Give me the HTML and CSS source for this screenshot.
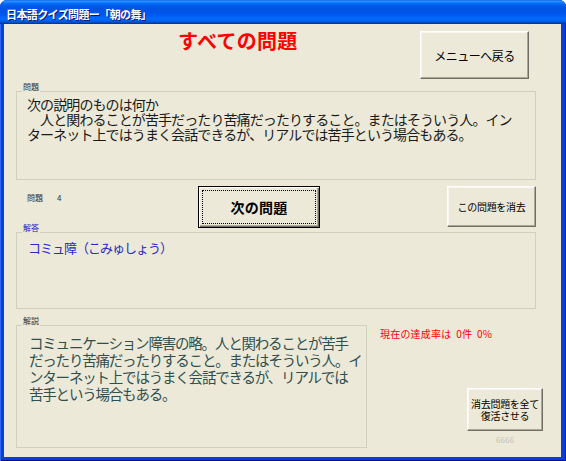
FILE: index.html
```html
<!DOCTYPE html>
<html lang="ja">
<head>
<meta charset="utf-8">
<title>日本語クイズ問題</title>
<link rel="stylesheet" href="styles.css">
</head>
<body>
<div class="window">
  <div class="titlebar"><span class="title">日本語クイズ問題ー「朝の舞」</span></div>
  <div class="client">
    <div class="row-top">
      <h1 class="heading">すべての問題</h1>
      <button class="btn btn-menu">メニューへ戻る</button>
    </div>
    <div class="frame frame-q">
      <span class="frame-label">問題</span>
      <p class="q-text">次の説明のものは何か<br>　人と関わることが苦手だったり苦痛だったりすること。またはそういう人。イン<br>ターネット上ではうまく会話できるが、リアルでは苦手という場合もある。</p>
    </div>
    <div class="row-mid">
      <div class="qno"><span>問題</span><span class="num">4</span></div>
      <button class="btn btn-default btn-next"><span class="focus">次の問題</span></button>
      <span class="spacer"></span>
      <button class="btn btn-del">この問題を消去</button>
    </div>
    <div class="frame frame-a">
      <span class="frame-label label-blue">解答</span>
      <p class="a-text">コミュ障（こみゅしょう）</p>
    </div>
    <div class="row-bottom">
      <div class="frame frame-e">
        <span class="frame-label">解説</span>
        <p class="e-text">コミュニケーション障害の略。人と関わることが苦手<br>だったり苦痛だったりすること。またはそういう人。イ<br>ンターネット上ではうまく会話できるが、リアルでは<br>苦手という場合もある。</p>
      </div>
      <div class="side">
        <div class="rate">現在の達成率は&nbsp;&nbsp;0件&nbsp;&nbsp;0%</div>
        <button class="btn btn-restore">消去問題を全て<br>復活させる</button>
        <div class="code">6666</div>
      </div>
    </div>
  </div>
</div>
</body>
</html>
```

FILE: styles.css
```css
html, body {
  margin: 0;
  padding: 0;
  background: #ffffff;
}

body {
  font-family: "Noto Sans CJK JP", "Noto Sans", sans-serif;
}

.window {
  width: 566px;
  height: 461px;
  display: flex;
  flex-direction: column;
  background: #0a3fd6;
  border-radius: 7px 7px 0 0;
  box-shadow: inset 1px 0 #2d6cf0, inset -1px 0 #0026a6, inset 0 -1px #00138c;
  overflow: hidden;
}

.titlebar {
  height: 24px;
  flex: none;
  display: flex;
  align-items: center;
  padding-left: 6px;
  background: linear-gradient(to bottom,
    #0058ee 0%, #3593ff 4%, #288eff 7%, #127dff 10%, #036ffc 14%,
    #0262ee 20%, #0057e5 28%, #0054e3 36%, #0055eb 56%, #005bf5 66%,
    #026afe 76%, #0062ef 86%, #0052d6 92%, #0040ab 96%, #003092 100%);
}

.title {
  color: #ffffff;
  font-size: 11px;
  font-weight: bold;
  letter-spacing: -0.6px;
  line-height: 14px;
  margin-top: 3px;
  text-shadow: 1px 1px #0a1883;
}

.client {
  flex: 1;
  margin: 0 5px 4px 4px;
  padding-left: 12px;
  background: #ece9d8;
}

.row-top {
  display: grid;
  grid-template-columns: 162px 242px 109px;
  height: 55px;
}

.heading {
  grid-column: 2;
  margin: 5px 0 0;
  font-size: 20px;
  line-height: 24px;
  font-weight: bold;
  color: #ff0000;
  letter-spacing: 0.3px;
}

.btn {
  font-family: "Noto Sans CJK JP", "Noto Sans", sans-serif;
  background: #ece9d8;
  color: #000000;
  margin: 0;
  padding: 0;
  border: 1px solid;
  border-color: #ffffff #716f64 #716f64 #ffffff;
  box-shadow: inset -1px -1px #aca899, inset 1px 1px #f7f6f0;
  cursor: default;
}

.btn-menu {
  grid-column: 3;
  margin-top: 7px;
  height: 48px;
  font-size: 12px;
  letter-spacing: -0.5px;
}

.frame {
  position: relative;
  box-sizing: border-box;
  border: 1px solid #d0d0bf;
}

.frame-label {
  position: absolute;
  left: 5px;
  top: -11px;
  height: 11px;
  line-height: 11px;
  padding: 0 1px;
  font-size: 8px;
  color: #303030;
  background: #ece9d8;
}

.label-blue {
  color: #1a1ad0;
}

.frame-q {
  margin-top: 12px;
  width: 520px;
  height: 89px;
  padding: 5px 0 0 10px;
}

.q-text {
  margin: 0;
  font-size: 14px;
  line-height: 15px;
  letter-spacing: -0.9px;
  color: #1a1a1a;
  white-space: nowrap;
}

.row-mid {
  display: grid;
  grid-template-columns: 182px 122px 127px 89px;
  height: 42px;
  margin-top: 6px;
}

.qno {
  padding: 6px 0 0 11px;
  font-size: 8px;
  line-height: 11px;
  color: #303030;
}

.qno .num {
  margin-left: 14px;
}

.btn-default {
  border: 1px solid #000000;
  box-shadow: inset 1px 1px #ffffff, inset -1px -1px #716f64, inset -2px -2px #aca899;
  display: flex;
  padding: 3px;
}

.btn-next {
  height: 42px;
}

.btn-next .focus {
  flex: 1;
  display: flex;
  align-items: center;
  justify-content: center;
  border: 1px dotted #000000;
  font-size: 14px;
  font-weight: bold;
  letter-spacing: 0.3px;
}

.btn-del {
  height: 41px;
  font-size: 10px;
  letter-spacing: -0.3px;
}

.frame-a {
  margin-top: 4px;
  width: 520px;
  height: 77px;
  padding: 7px 0 0 11px;
}

.a-text {
  margin: 0;
  font-size: 13px;
  line-height: 16px;
  letter-spacing: -1px;
  color: #2b2bc0;
}

.row-bottom {
  display: flex;
  margin-top: 16px;
}

.frame-e {
  width: 351px;
  height: 123px;
  padding: 8px 0 0 12px;
}

.e-text {
  margin: 0;
  font-size: 14.5px;
  line-height: 17px;
  letter-spacing: -1.2px;
  color: #2f4f4f;
  white-space: nowrap;
}

.side {
  margin-left: 13px;
  display: flex;
  flex-direction: column;
}

.rate {
  margin-top: 3px;
  font-size: 10px;
  line-height: 12px;
  color: #ff0000;
  letter-spacing: 0.2px;
}

.btn-restore {
  margin: 48px 0 0 87px;
  width: 76px;
  height: 43px;
  font-size: 10px;
  line-height: 12px;
  letter-spacing: -0.3px;
}

.code {
  margin-left: 87px;
  width: 76px;
  margin-top: 4px;
  text-align: center;
  font-size: 8px;
  line-height: 10px;
  color: #c4c2b6;
}
```
